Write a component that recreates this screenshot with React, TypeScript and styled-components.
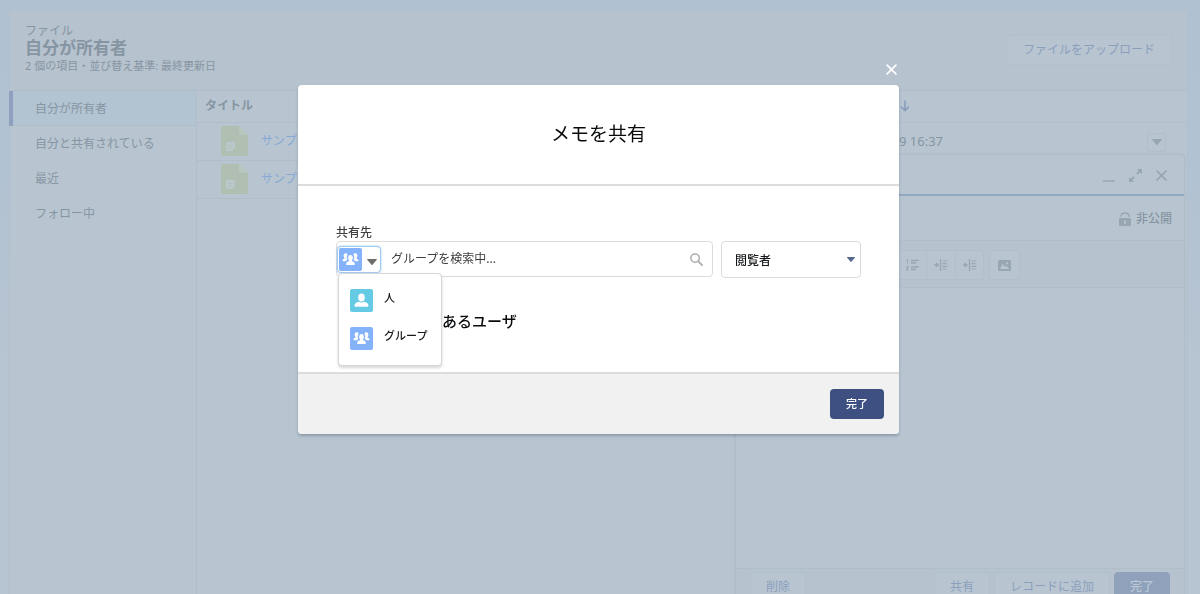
import React from "react";
import styled, { createGlobalStyle, css } from "styled-components";
import { Bold, Italic, Underline, Strikethrough, List } from "lucide-react";

const c = {
  surface: "#b8c5d1",
  band: "#b6c2ce",
  line: "#b0beca",
  text: "#8695a2",
  brand: "#8b9fbc",
  icon: "#98a6b2",
  navy: "#3d5081",
};

const GlobalStyle = createGlobalStyle`
  *, *::before, *::after { box-sizing: border-box; }
  body { margin: 0; overflow: hidden; background: #b7c4d2; }
  body, button, input, select {
    font-family: "Noto Sans", "Noto Sans CJK JP", sans-serif;
    font-size: 12px;
    line-height: 16px;
  }
  h1, h2, h3, p { margin: 0; }
  svg { display: block; flex: none; }
`;

const Page = styled.div`
  position: relative;
  height: 100vh;
  overflow: hidden;
  display: flex;
  padding: 10px 12px 0 9px;
  background: linear-gradient(#b0c2d1 0, #b1c2d2 160px, #b7c4d2 360px);
  color: ${c.text};
`;

const Card = styled.main`
  flex: 1;
  min-width: 0;
  display: flex;
  flex-direction: column;
  border: 1px solid #b2bfcc;
  border-bottom: 0;
  border-radius: 4px 4px 0 0;
  background: ${c.surface};
`;

const CardHeader = styled.header`
  display: flex;
  justify-content: space-between;
  align-items: flex-start;
  height: 80px;
  padding: 12px 15px 0 15px;
  border-bottom: 1px solid ${c.line};
  background: ${c.band};
`;

const PageTitle = styled.h1`
  font-size: 17px;
  line-height: 18px;
`;

const Meta = styled.p`
  font-size: 11px;
  line-height: 18px;
`;

const GhostButton = styled.button`
  height: 30px;
  padding: 0 15px;
  border: 1px solid #b1c0cd;
  border-radius: 4px;
  background: ${c.surface};
  color: ${c.brand};
  white-space: nowrap;
`;

const UploadButton = styled(GhostButton)`
  margin-top: 12px;
  padding: 0 16px;
`;

const Columns = styled.div`
  flex: 1;
  display: flex;
`;

const SideNav = styled.nav`
  flex: none;
  width: 187px;
  border-right: 1px solid ${c.line};
`;

const NavLink = styled.a<{ $active?: boolean }>`
  display: flex;
  align-items: center;
  height: 35px;
  padding-left: 25px;
  color: ${c.text};
  text-decoration: none;
  ${(p) =>
    p.$active &&
    css`
      margin-left: -1px;
      padding-left: 22px;
      border-left: 4px solid #8ea0be;
      box-shadow: inset 0 -1px ${c.line};
      background: #b2c3d2;
    `}
`;

const TableWrap = styled.div`
  flex: 1;
`;

const FileTable = styled.table`
  width: 100%;
  table-layout: fixed;
  border-collapse: collapse;
  tr { border-bottom: 1px solid ${c.line}; }
  th, td { padding: 0; text-align: left; }
  thead tr { height: 31px; }
  th { padding: 0 0 0 8px; }
  tbody tr { height: 38px; }
  th:first-child { width: 702px; }
`;

const FileCell = styled.div`
  display: flex;
  align-items: center;
  gap: 13px;
  padding-left: 24px;
`;

const FileLink = styled.a`
  color: #86a9d3;
  text-decoration: none;
`;

const SortHead = styled.div`
  display: flex;
  align-items: center;
  height: 24px;
  margin-left: -7px;
`;

const DateCell = styled.div`
  display: flex;
  align-items: center;
  justify-content: space-between;
  padding-right: 21px;
  font-size: 13px;
`;

const RowMenu = styled.button`
  display: grid;
  place-items: center;
  width: 19px;
  height: 19px;
  margin-top: 2px;
  padding: 0;
  border: 1px solid ${c.line};
  border-radius: 3px;
  background: none;
`;

const Composer = styled.section`
  position: absolute;
  top: 154px;
  right: 15px;
  display: flex;
  flex-direction: column;
  width: 450px;
  height: 460px;
  border: 1px solid ${c.line};
  border-radius: 4px;
  background: ${c.surface};
  box-shadow: 0 0 2px #a6b5c2;
`;

const ComposerHeader = styled.header`
  display: flex;
  align-items: center;
  justify-content: flex-end;
  gap: 14px;
  height: 41px;
  padding: 2px 17px 0 0;
  border-bottom: 2px solid #92a7c1;
`;

const IconButton = styled.button`
  display: block;
  padding: 0;
  border: 0;
  background: none;
`;

const Privacy = styled.div`
  display: flex;
  align-items: center;
  justify-content: flex-end;
  gap: 5px;
  height: 44px;
  padding: 1px 12px 0 0;
  font-weight: 500;
`;

const Toolbar = styled.div`
  display: flex;
  gap: 5px;
  height: 48px;
  padding: 9px;
  border: solid ${c.line};
  border-width: 1px 0;
  background: ${c.band};
`;

const ToolGroup = styled.div`
  display: flex;
  height: 30px;
  border: 1px solid #b0bfcb;
  border-radius: 4px;
  background: ${c.surface};
`;

const Tool = styled.button`
  display: grid;
  place-items: center;
  width: 29px;
  padding: 0;
  border: 0;
  background: none;
  color: ${c.icon};
  & + & { border-left: 1px solid #b0bfcb; }
  &:last-child:not(:first-child) { width: 28px; }
`;

const NoteBody = styled.div`
  flex: 1;
  border-bottom: 1px solid ${c.line};
`;

const ComposerFooter = styled.footer`
  display: flex;
  gap: 4px;
  height: 44px;
  padding: 3px 14px 0;
  background: ${c.band};
`;

const DeleteButton = styled(GhostButton)`
  margin-right: auto;
`;

const FadedPrimary = styled(GhostButton)`
  border-color: #8fa1bb;
  background: #8fa1bb;
  color: #b9c7d6;
  font-weight: 500;
`;

const Overlay = styled.div`
  position: fixed;
  inset: 0;
  display: flex;
  justify-content: center;
  align-items: flex-start;
  padding: 62px 3px 0 0;
`;

const ModalColumn = styled.div`
  display: flex;
  flex-direction: column;
  width: 50.2%;
  min-width: 520px;
`;

const CloseButton = styled(IconButton)`
  align-self: flex-end;
  margin-right: 2px;
  padding: 2px 0 10px;
`;

const Dialog = styled.section`
  border-radius: 4px;
  background: #fff;
  color: #080a0c;
  box-shadow: 0 2px 3px rgba(60, 75, 90, 0.35);
`;

const DialogHeader = styled.header`
  display: grid;
  place-items: center;
  height: 101px;
  padding-bottom: 2px;
  border-bottom: 2px solid #dddcdb;
`;

const DialogTitle = styled.h2`
  font-size: 19px;
  line-height: 24px;
  font-weight: 400;
`;

const DialogBody = styled.div`
  min-height: 186px;
  padding: 39px 38px 0;
`;

const FieldLabel = styled.label`
  display: block;
  color: #3e3e3c;
  font-weight: 500;
`;

const FieldRow = styled.div`
  display: flex;
  gap: 8px;
`;

const Lookup = styled.div`
  position: relative;
  flex: 1;
  display: flex;
  align-items: center;
  height: 36px;
  padding: 0 9px 0 0;
  border: 1px solid #dddbda;
  border-radius: 4px;
`;

const EntityButton = styled.button`
  display: flex;
  align-items: center;
  gap: 5px;
  width: 44px;
  height: 27px;
  padding: 0 1px;
  border: 1px solid #a3cbf2;
  border-radius: 4px;
  background: #fff;
  box-shadow: 0 0 2px #8fc0f2;
`;

const CaretSlot = styled.span`
  padding-top: 5px;
`;

const Tile = styled.span<{ $color: string }>`
  flex: none;
  display: grid;
  place-items: center;
  width: 23px;
  height: 23px;
  border-radius: 2px;
  background: ${(p) => p.$color};
`;

const SearchInput = styled.input`
  flex: 1;
  min-width: 0;
  padding: 0 0 1px;
  margin-left: 10px;
  border: 0;
  outline: 0;
  background: none;
  &::placeholder { color: #3e3e3c; opacity: 1; }
`;

const EntityMenu = styled.ul`
  position: absolute;
  top: 31px;
  left: 1px;
  z-index: 1;
  width: 104px;
  height: 93px;
  margin: 0;
  padding: 7px 0;
  list-style: none;
  border: 1px solid #d8d7d6;
  border-radius: 4px;
  background: #fff;
  box-shadow: 0 2px 3px rgba(0, 0, 0, 0.16);
`;

const EntityOption = styled.button`
  display: flex;
  align-items: center;
  gap: 11px;
  width: 100%;
  height: 38px;
  padding: 0 11px;
  border: 0;
  background: none;
  color: #16181a;
  font-size: 11px;
  font-weight: 500;
`;

const OptionText = styled.span`
  padding-bottom: 4px;
`;

const SelectWrap = styled.div`
  position: relative;
  width: 140px;
`;

const RoleSelect = styled.select`
  appearance: none;
  width: 100%;
  height: 37px;
  padding: 2px 24px 0 13px;
  border: 1px solid #dddbda;
  border-radius: 4px;
  background: #fff;
  color: #16181a;
  font-weight: 500;
`;

const SelectArrow = styled.span`
  position: absolute;
  top: 16px;
  right: 6px;
  pointer-events: none;
`;

const SectionTitle = styled.h3`
  margin-top: 33px;
  padding-left: 106px;
  font-size: 15px;
  line-height: 20px;
  font-weight: 500;
`;

const DialogFooter = styled.footer`
  display: flex;
  justify-content: flex-end;
  height: 62px;
  padding: 15px 15px 0;
  border-top: 2px solid #dddcdb;
  border-radius: 0 0 4px 4px;
  background: #f1f1f1;
`;

const PrimaryButton = styled.button`
  height: 30px;
  padding: 0 16px;
  border: 0;
  border-radius: 4px;
  background: ${c.navy};
  color: #fff;
  font-size: 11px;
  font-weight: 500;
`;

const Caret = ({ w = 10, h = 6, color }: { w?: number; h?: number; color: string }) => (
  <svg width={w} height={h} viewBox="0 0 10 6" preserveAspectRatio="none">
    <path d="M.6 0h8.8a.5.5 0 0 1 .4.8L5.5 5.7a.7.7 0 0 1-1 0L.2.8A.5.5 0 0 1 .6 0z" fill={color} />
  </svg>
);

const NoteFile = () => (
  <svg width="27" height="30" viewBox="0 0 27 30">
    <path d="M2 0h16l9 9v19a2 2 0 0 1-2 2H2a2 2 0 0 1-2-2V2a2 2 0 0 1 2-2z" fill="#b1bfb3" />
    <path d="M18 0l9 9h-7a2 2 0 0 1-2-2z" fill="#b8c7be" />
    <path d="M6 16h7a1 1 0 0 1 1 1v5l-3 3H6a1 1 0 0 1-1-1v-7a1 1 0 0 1 1-1z" fill="#bac8cb" />
    <path d="M7 19.500h5M7 21.800h3.500" stroke="#b1bfb3" strokeWidth=".8" />
  </svg>
);

const Person = () => (
  <svg width="15" height="15" viewBox="0 0 15 15" fill="#fff">
    <ellipse cx="7.500" cy="4.500" rx="3.300" ry="3.900" />
    <path d="M.5 12.500c0-2 2.200-3 4.500-3.700 1.600 1 3.400 1 5 0 2.300.7 4.500 1.700 4.500 3.700 0 .9-.6 1.300-1.300 1.300H1.800c-.7 0-1.300-.4-1.300-1.300z" />
  </svg>
);

const Group = () => (
  <svg width="17" height="15" viewBox="0 0 17 15" fill="#fff">
    <path d="M5.600 2.600C5.200 1.700 4.500 1.200 3.700 1.200 2.400 1.200 1.600 2.300 1.600 3.700c0 1 .4 1.700.9 2.200v.6C1.300 7 .5 7.500.5 8.500c0 .5.300.7.700.7h2.500c.4-.5 1-.9 1.700-1.200C4.500 6.800 4.400 4.300 5.600 2.600z" />
    <path d="M11.400 2.600c.4-.9 1.100-1.400 1.900-1.400 1.300 0 2.100 1.100 2.100 2.500 0 1-.4 1.700-.9 2.200v.6c1.200.5 2 1 2 2 0 .5-.3.7-.7.7h-2.500c-.4-.5-1-.9-1.700-1.200.9-1.200 1-3.700-.2-5.400z" />
    <path d="M8.500 2.900c1.500 0 2.400 1.200 2.400 2.800 0 1.100-.4 1.900-1 2.500v.8c1.400.5 2.900 1.200 2.900 2.900 0 .8-.4 1.200-.9 1.200H5.100c-.5 0-.9-.4-.9-1.200 0-1.700 1.500-2.400 2.900-2.900v-.8c-.6-.6-1-1.400-1-2.500 0-1.600.9-2.800 2.400-2.800z" />
  </svg>
);

const Cross = ({ color, size }: { color: string; size: number }) => (
  <svg width={size} height={size} viewBox="0 0 10 10" fill="none" stroke={color} strokeWidth="1.500" strokeLinecap="round">
    <path d="M1 1l8 8M9 1L1 9" />
  </svg>
);

const Expand = () => (
  <svg width="13" height="13" viewBox="0 0 13 13" fill={c.icon}>
    <path d="M8 0h4.500a.5.5 0 0 1 .5.5V5l-1.700-1.700-2.500 2.500L7.200 4.200l2.500-2.500zM5 13H.5a.5.5 0 0 1-.5-.5V8l1.700 1.700 2.500-2.500 1.600 1.600-2.500 2.500z" />
  </svg>
);

const Unlock = () => (
  <svg width="12" height="14" viewBox="0 0 12 14">
    <path d="M2 4.800C2 2.300 3.500 1 6 1s4 1.300 4 3.800" fill="none" stroke={c.icon} strokeWidth="1.500" />
    <path fillRule="evenodd" d="M1 6h10a1 1 0 0 1 1 1v6a1 1 0 0 1-1 1H1a1 1 0 0 1-1-1V7a1 1 0 0 1 1-1zm4.200 2.500v3.500h1.600V8.500z" fill={c.icon} />
  </svg>
);

const Numbered = () => (
  <svg width="13" height="12" viewBox="0 0 13 12" fill="none" stroke={c.icon}>
    <path d="M5 1.500h8M5 4h5M5 8h8M5 10.500h5" strokeWidth="1.400" />
    <path d="M.5 1.200l1-.7v4M.3 7.400h2v1.800h-1.800v2h2" />
  </svg>
);

const Indent = ({ out }: { out?: boolean }) => (
  <svg width="14" height="12" viewBox="0 0 14 12" fill="none" stroke={c.icon}>
    <path d="M6.500 0v12" strokeWidth="1.300" />
    <path d="M8.500 2h5M8.500 4.700h4M8.500 7.300h5M8.500 10h4" strokeWidth="1.200" />
    <path d={out ? "M5 6H1M2.800 4L.8 6l2 2" : "M0 6h4M2.200 4l2 2-2 2"} strokeWidth="1.300" />
  </svg>
);

const Picture = () => (
  <svg width="13" height="11" viewBox="0 0 13 11">
    <rect width="13" height="11" rx="1.500" fill={c.icon} />
    <path d="M1.800 9l2.700-4.600c.2-.4.600-.4.800 0L7 7l1-1c.3-.3.600-.3.800 0L11.200 9z" fill={c.surface} />
    <circle cx="9" cy="3.300" r="1.100" fill={c.surface} />
  </svg>
);

const Magnifier = () => (
  <svg width="13" height="13" viewBox="0 0 13 13" fill="none" stroke="#aeacaa">
    <circle cx="5.100" cy="5.100" r="4.200" strokeWidth="1.500" />
    <path d="M8.300 8.300l3.800 3.800" strokeWidth="1.800" strokeLinecap="round" />
  </svg>
);

const SortArrow = () => (
  <svg width="10" height="12" viewBox="0 0 10 12" fill="none" stroke={c.brand} strokeWidth="1.700" strokeLinecap="round" strokeLinejoin="round">
    <path d="M5 1v9.500M1.500 7.200L5 10.700l3.500-3.500" />
  </svg>
);

const views = ["自分が所有者", "自分と共有されている", "最近", "フォロー中"];
const files = [
  { title: "サンプ", date: "9 16:37" },
  { title: "サンプ", date: "" },
];

export default function App() {
  return (
    <>
      <GlobalStyle />
      <Page>
        <Card>
          <CardHeader>
            <div>
              <p>ファイル</p>
              <PageTitle>自分が所有者</PageTitle>
              <Meta>2 個の項目・並び替え基準: 最終更新日</Meta>
            </div>
            <UploadButton>ファイルをアップロード</UploadButton>
          </CardHeader>
          <Columns>
            <SideNav>
              {views.map((v, i) => (
                <NavLink key={v} href="#" $active={i === 0}>{v}</NavLink>
              ))}
            </SideNav>
            <TableWrap>
              <FileTable>
                <thead>
                  <tr>
                    <th>タイトル</th>
                    <th aria-label="最終更新日"><SortHead><SortArrow /></SortHead></th>
                  </tr>
                </thead>
                <tbody>
                  {files.map((f, i) => (
                    <tr key={i}>
                      <td><FileCell><NoteFile /><FileLink href="#">{f.title}</FileLink></FileCell></td>
                      <td>
                        <DateCell>
                          {f.date}
                          {f.date && <RowMenu aria-label="アクション"><Caret color={c.icon} /></RowMenu>}
                        </DateCell>
                      </td>
                    </tr>
                  ))}
                </tbody>
              </FileTable>
            </TableWrap>
          </Columns>
        </Card>

        <Composer aria-label="メモ">
          <ComposerHeader>
            <IconButton aria-label="最小化">
              <svg width="12" height="13" viewBox="0 0 12 13"><path d="M0 12h12" stroke={c.icon} strokeWidth="1.500" /></svg>
            </IconButton>
            <IconButton aria-label="最大化"><Expand /></IconButton>
            <IconButton aria-label="閉じる"><Cross color={c.icon} size={11} /></IconButton>
          </ComposerHeader>
          <Privacy><Unlock />非公開</Privacy>
          <Toolbar>
            <ToolGroup>
              <Tool aria-label="太字"><Bold size={13} /></Tool>
              <Tool aria-label="斜体"><Italic size={13} /></Tool>
              <Tool aria-label="下線"><Underline size={13} /></Tool>
              <Tool aria-label="取り消し線"><Strikethrough size={13} /></Tool>
            </ToolGroup>
            <ToolGroup>
              <Tool aria-label="箇条書き"><List size={13} /></Tool>
              <Tool aria-label="番号付きリスト"><Numbered /></Tool>
              <Tool aria-label="インデント"><Indent /></Tool>
              <Tool aria-label="インデント解除"><Indent out /></Tool>
            </ToolGroup>
            <ToolGroup>
              <Tool aria-label="画像"><Picture /></Tool>
            </ToolGroup>
          </Toolbar>
          <NoteBody />
          <ComposerFooter>
            <DeleteButton>削除</DeleteButton>
            <GhostButton>共有</GhostButton>
            <GhostButton>レコードに追加</GhostButton>
            <FadedPrimary>完了</FadedPrimary>
          </ComposerFooter>
        </Composer>
      </Page>

      <Overlay>
        <ModalColumn>
          <CloseButton aria-label="閉じる"><Cross color="#fff" size={11} /></CloseButton>
          <Dialog role="dialog" aria-labelledby="share-title">
            <DialogHeader><DialogTitle id="share-title">メモを共有</DialogTitle></DialogHeader>
            <DialogBody>
              <FieldLabel htmlFor="share-with">共有先</FieldLabel>
              <FieldRow>
                <Lookup>
                  <EntityButton aria-label="種別" aria-expanded="true">
                    <Tile $color="#84b2fb"><Group /></Tile>
                    <CaretSlot><Caret color="#706e6b" /></CaretSlot>
                  </EntityButton>
                  <SearchInput id="share-with" placeholder="グループを検索中..." />
                  <Magnifier />
                  <EntityMenu>
                    <li>
                      <EntityOption><Tile $color="#65cae4"><Person /></Tile><OptionText>人</OptionText></EntityOption>
                    </li>
                    <li>
                      <EntityOption><Tile $color="#84b2fb"><Group /></Tile><OptionText>グループ</OptionText></EntityOption>
                    </li>
                  </EntityMenu>
                </Lookup>
                <SelectWrap>
                  <RoleSelect aria-label="権限"><option>閲覧者</option></RoleSelect>
                  <SelectArrow><Caret w={8} h={5} color="#54698d" /></SelectArrow>
                </SelectWrap>
              </FieldRow>
              <SectionTitle>あるユーザ</SectionTitle>
            </DialogBody>
            <DialogFooter><PrimaryButton>完了</PrimaryButton></DialogFooter>
          </Dialog>
        </ModalColumn>
      </Overlay>
    </>
  );
}
